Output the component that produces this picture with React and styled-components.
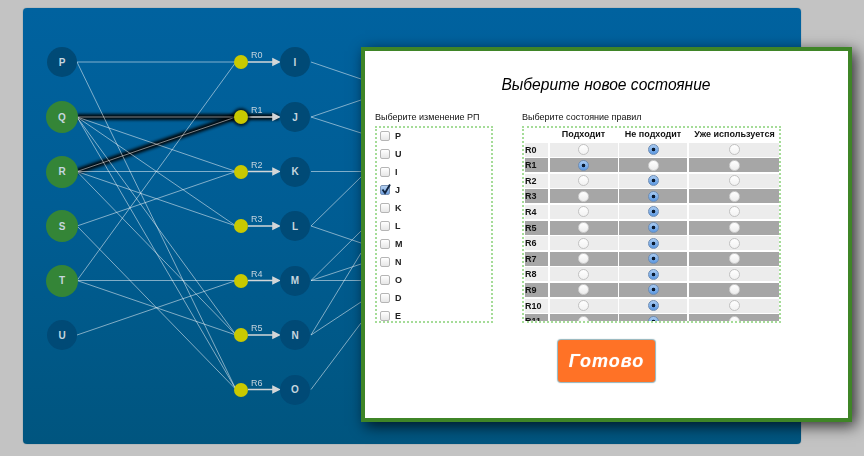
import React from 'react';
import styled, { createGlobalStyle } from 'styled-components';

const GlobalStyle = createGlobalStyle`
  html, body {
    margin: 0;
    padding: 0;
    background: #c3c3c3;
    overflow: hidden;
  }
  body {
    font-family: "Liberation Sans", Arial, sans-serif;
  }
`;

// diagram coordinates are page pixels, the panel starts at 23,8
const PANEL_X = 23;
const PANEL_Y = 8;

const places = [
  { id: 'P', y: 62, active: false },
  { id: 'Q', y: 117, active: true },
  { id: 'R', y: 171.5, active: true },
  { id: 'S', y: 226, active: true },
  { id: 'T', y: 280.5, active: true },
  { id: 'U', y: 335, active: false },
];
const rules = [
  { id: 'R0', y: 62, out: 'I' },
  { id: 'R1', y: 117, out: 'J' },
  { id: 'R2', y: 171.5, out: 'K' },
  { id: 'R3', y: 226, out: 'L' },
  { id: 'R4', y: 280.5, out: 'M' },
  { id: 'R5', y: 335, out: 'N' },
  { id: 'R6', y: 389.5, out: 'O' },
];
const inputs = [
  ['P', 'R0'], ['P', 'R6'],
  ['Q', 'R2'], ['Q', 'R3'], ['Q', 'R5'], ['Q', 'R6'],
  ['R', 'R2'], ['R', 'R3'], ['R', 'R5'],
  ['S', 'R2'], ['S', 'R6'],
  ['T', 'R0'], ['T', 'R4'], ['T', 'R5'],
  ['U', 'R4'],
];
const highlighted = [['Q', 'R1'], ['R', 'R1']];
// these run on under the dialog
const outputs = [
  [62, 79], [117, 100], [117, 133], [171.5, 171.5], [226, 177], [226, 243],
  [280.5, 231], [280.5, 264], [280.5, 280.5], [335, 253], [335, 302], [389.5, 323],
];

const placeY = (id) => places.find((p) => p.id === id).y;
const ruleY = (id) => rules.find((r) => r.id === id).y;

const changes = ['P', 'U', 'I', 'J', 'K', 'L', 'M', 'N', 'O', 'D', 'E'];
const ruleStates = [1, 0, 1, 1, 1, 1, 1, 1, 1, 1, 1, 1];

const Page = styled.div`
  width: 864px;
  height: 456px;
  box-sizing: border-box;
  padding: ${PANEL_Y}px 63px 12px ${PANEL_X}px;
  overflow: hidden;
  position: relative;
  filter: blur(0.4px);
`;

const Panel = styled.div`
  height: 100%;
  border-radius: 4px;
  background: linear-gradient(180deg, #00629f 0%, #005d94 45%, #00557f 100%);
  box-shadow: 0 0 1px rgba(0, 60, 90, 0.7);
  position: relative;
`;

const Wires = styled.svg`
  position: absolute;
  inset: 0;
  width: 100%;
  height: 100%;
`;

const Wire = styled.line`
  stroke: rgba(255, 255, 255, 0.5);
  stroke-width: 1;
`;

const Glow = styled.line`
  stroke: #000;
  stroke-width: 6;
  filter: blur(1.6px);
  opacity: 0.9;
`;

const Arrow = styled.path`
  stroke: #d2d6d8;
  fill: #d2d6d8;
  stroke-width: 1.6;
`;

const Circle = styled.div.attrs((p) => ({
  style: { left: p.$x - PANEL_X, top: p.$y - PANEL_Y },
}))`
  position: absolute;
  transform: translate(-50%, -50%);
  width: ${(p) => (p.$active ? 32 : 30)}px;
  height: ${(p) => (p.$active ? 32 : 30)}px;
  border-radius: 50%;
  background: ${(p) => (p.$active ? '#348537' : '#004a76')};
  color: #c6d6df;
  font-size: 10px;
  font-weight: bold;
  display: flex;
  align-items: center;
  justify-content: center;
`;

const Dot = styled.div.attrs((p) => ({
  style: { left: p.$x - PANEL_X, top: p.$y - PANEL_Y },
}))`
  position: absolute;
  transform: translate(-50%, -50%);
  width: 14px;
  height: 14px;
  border-radius: 50%;
  background: #c9c900;
  box-shadow: ${(p) => (p.$hot ? '0 0 3px 2px rgba(0, 0, 0, 0.75)' : 'none')};
`;

const RuleName = styled.span.attrs((p) => ({
  style: { left: p.$x - PANEL_X, top: p.$y - PANEL_Y },
}))`
  position: absolute;
  font-size: 9px;
  line-height: 10px;
  color: #c3d3dd;
`;

const Dialog = styled.div`
  position: absolute;
  left: 361px;
  top: 47px;
  width: 491px;
  height: 375px;
  box-sizing: border-box;
  background: #fff;
  border: 4px solid #3f8527;
  box-shadow: 4px 4px 14px rgba(0, 0, 0, 0.75);
  padding: 25px 10px 0;
  display: flex;
  flex-direction: column;
`;

const Title = styled.h2`
  margin: 0 0 18px;
  font-size: 15.6px;
  line-height: 18px;
  font-weight: normal;
  font-style: italic;
  color: #000;
  text-align: center;
  padding-right: 1px;
`;

const Columns = styled.div`
  display: flex;
  gap: 29px;
`;

const Caption = styled.div`
  font-size: 9px;
  line-height: 10px;
  color: #111;
  margin-bottom: 4px;
`;

const DottedBox = styled.div`
  box-sizing: border-box;
  height: 197px;
  width: ${(p) => p.$width}px;
  border: 2px dotted #a5dc98;
  overflow: hidden;
`;

const CheckList = styled.div`
  display: flex;
  flex-direction: column;
  gap: 8px;
  padding: 3px 0 0 3px;
`;

const CheckRow = styled.label`
  display: flex;
  align-items: center;
  gap: 5px;
  height: 10px;
  font-size: 9px;
  font-weight: bold;
  color: #222;
  position: relative;
`;

const Box = styled.input`
  appearance: none;
  margin: 0;
  width: 10px;
  height: 10px;
  box-sizing: border-box;
  border: 1px solid #b5b5b5;
  border-radius: 2px;
  background: linear-gradient(180deg, #fff, #e6e6e6);
  &:checked {
    background: linear-gradient(180deg, #b7d2f2, #6f9fde);
    border-color: #7a93b5;
  }
`;

const Tick = styled.svg`
  position: absolute;
  left: 0;
  top: -2px;
  width: 12px;
  height: 12px;
`;

const Grid = styled.div`
  display: grid;
  grid-template-columns: 23px 68px 68px 92px;
  grid-auto-rows: 14px;
  column-gap: 1.5px;
  row-gap: 1.6px;
  margin-top: -1px;
  padding: 0 0 0 1px;
`;

const Head = styled.div`
  font-size: 9px;
  font-weight: bold;
  color: #111;
  text-align: center;
  line-height: 14px;
  white-space: nowrap;
`;

const RowName = styled.div`
  font-size: 9px;
  font-weight: bold;
  line-height: 14px;
  color: #111;
  background: ${(p) => (p.$dark ? '#a6a6a6' : '#eeeeee')};
`;

const Cell = styled.div`
  background: ${(p) => (p.$dark ? '#a6a6a6' : '#ececec')};
  display: flex;
  align-items: center;
  justify-content: center;
`;

const Radio = styled.input`
  appearance: none;
  margin: 0;
  width: 11px;
  height: 11px;
  box-sizing: border-box;
  border-radius: 50%;
  border: 1px solid ${(p) => (p.$dark ? '#d0d0d0' : '#c2c2c2')};
  background: ${(p) =>
    p.$dark ? 'linear-gradient(180deg, #fff, #ececec)' : 'linear-gradient(180deg, #fff, #f2f2f2)'};
  &:checked {
    border-color: #6d8db5;
    background: radial-gradient(circle, #0a1a30 0 1.6px, transparent 2.1px),
      linear-gradient(180deg, #a9cbf2, #5b98e2);
  }
`;

const Done = styled.button`
  align-self: flex-start;
  margin: 17px 0 0 183px;
  width: 97px;
  height: 42px;
  border: none;
  border-radius: 3px;
  background: #ff7226;
  box-shadow: 0 0 1px 1px rgba(120, 160, 170, 0.8);
  color: #fff;
  font-family: "Liberation Sans", Arial, sans-serif;
  font-size: 18px;
  font-weight: bold;
  font-style: italic;
  letter-spacing: 1px;
  text-shadow: 0 0 1px rgba(255, 255, 255, 0.5);
  padding: 0;
`;

export default function App() {
  return (
    <Page>
      <GlobalStyle />
      <Panel>
        <Wires viewBox={`${PANEL_X} ${PANEL_Y} 778 436`}>
          {highlighted.map(([from, to]) => (
            <Glow key={from + to} x1="77" y1={placeY(from)} x2="235" y2={ruleY(to)} />
          ))}
          <Glow x1="248" y1="117" x2="279" y2="117" />
          {inputs.concat(highlighted).map(([from, to]) => (
            <Wire key={from + to} x1="77" y1={placeY(from)} x2="236" y2={ruleY(to)} />
          ))}
          {outputs.map(([y1, y2]) => (
            <Wire key={`${y1}-${y2}`} x1="311" y1={y1} x2="361" y2={y2} />
          ))}
          {rules.map((r) => (
            <Arrow key={r.id} d={`M248 ${r.y}H273M273 ${r.y - 3}L279 ${r.y}L273 ${r.y + 3}Z`} />
          ))}
        </Wires>
        {places.map((p) => (
          <Circle key={p.id} $x={62} $y={p.y} $active={p.active}>
            {p.id}
          </Circle>
        ))}
        {rules.map((r) => (
          <React.Fragment key={r.id}>
            <Dot $x={241} $y={r.y} $hot={r.id === 'R1'} />
            <RuleName $x={251} $y={r.y - 12}>
              {r.id}
            </RuleName>
            <Circle $x={295} $y={r.y}>
              {r.out}
            </Circle>
          </React.Fragment>
        ))}
      </Panel>
      <Dialog>
        <Title>Выберите новое состояние</Title>
        <Columns>
          <div>
            <Caption>Выберите изменение РП</Caption>
            <DottedBox $width={118}>
              <CheckList>
                {changes.map((c) => (
                  <CheckRow key={c}>
                    <Box type="checkbox" defaultChecked={c === 'J'} />
                    {c}
                    {c === 'J' && (
                      <Tick viewBox="0 0 12 12">
                        <path d="M2.5 6.5L5 10L10 1.5" fill="none" stroke="#10233f" strokeWidth="1.9" />
                      </Tick>
                    )}
                  </CheckRow>
                ))}
              </CheckList>
            </DottedBox>
          </div>
          <div>
            <Caption>Выберите состояние правил</Caption>
            <DottedBox $width={259}>
              <Grid>
                <span />
                <Head>Подходит</Head>
                <Head>Не подходит</Head>
                <Head>Уже используется</Head>
                {ruleStates.map((state, i) => {
                  const dark = i % 2 === 1;
                  return (
                    <React.Fragment key={i}>
                      <RowName $dark={dark}>R{i}</RowName>
                      {[0, 1, 2].map((col) => (
                        <Cell key={col} $dark={dark}>
                          <Radio type="radio" name={`rule${i}`} $dark={dark} defaultChecked={state === col} />
                        </Cell>
                      ))}
                    </React.Fragment>
                  );
                })}
              </Grid>
            </DottedBox>
          </div>
        </Columns>
        <Done>Готово</Done>
      </Dialog>
    </Page>
  );
}
